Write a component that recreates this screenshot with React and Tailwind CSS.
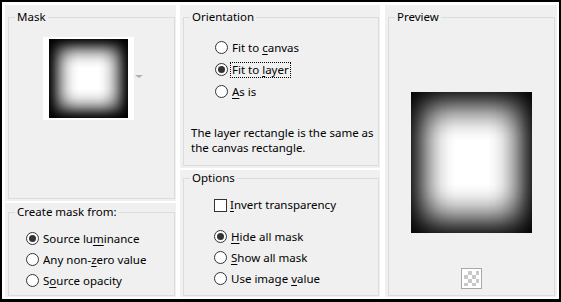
import React from 'react';

function Radio({ checked }) {
  return (
    <span className="w-[13px] h-[13px] shrink-0 rounded-full border border-[#333] bg-white flex items-center justify-center">
      {checked && <span className="w-[7px] h-[7px] rounded-full bg-[#333]" />}
    </span>
  );
}

function Option({ checked, focus, children }) {
  return (
    <div className="flex items-center h-[21px]">
      <Radio checked={checked} />
      <span
        className={
          'ml-[2px] px-[1px] leading-[14px] border border-dotted whitespace-nowrap ' +
          (focus ? 'border-black' : 'border-transparent')
        }
      >
        {children}
      </span>
    </div>
  );
}

function Key({ children }) {
  return <u className="underline underline-offset-2 decoration-1">{children}</u>;
}

function Legend({ children }) {
  return <legend className="ml-[6px] px-[2px] leading-[16px]">{children}</legend>;
}

// soft square fade: two edge gradients stacked on white
const fadeThumb =
  'bg-white bg-[image:linear-gradient(to_right,rgba(0,0,0,.95)_0%,rgba(0,0,0,.8)_5%,rgba(0,0,0,.6)_10%,rgba(0,0,0,.4)_15%,rgba(0,0,0,.24)_20%,rgba(0,0,0,.12)_25%,rgba(0,0,0,.04)_31%,transparent_37%,transparent_63%,rgba(0,0,0,.04)_69%,rgba(0,0,0,.12)_75%,rgba(0,0,0,.24)_80%,rgba(0,0,0,.4)_85%,rgba(0,0,0,.6)_90%,rgba(0,0,0,.8)_95%,rgba(0,0,0,.95)_100%),linear-gradient(to_bottom,rgba(0,0,0,.95)_0%,rgba(0,0,0,.8)_5%,rgba(0,0,0,.6)_10%,rgba(0,0,0,.4)_15%,rgba(0,0,0,.24)_20%,rgba(0,0,0,.12)_25%,rgba(0,0,0,.04)_31%,transparent_37%,transparent_63%,rgba(0,0,0,.04)_69%,rgba(0,0,0,.12)_75%,rgba(0,0,0,.24)_80%,rgba(0,0,0,.4)_85%,rgba(0,0,0,.6)_90%,rgba(0,0,0,.8)_95%,rgba(0,0,0,.95)_100%)]';

const fadePreview =
  'bg-white bg-[image:linear-gradient(to_right,rgba(0,0,0,.85)_0%,rgba(0,0,0,.7)_5%,rgba(0,0,0,.52)_10%,rgba(0,0,0,.35)_15%,rgba(0,0,0,.21)_20%,rgba(0,0,0,.1)_25%,rgba(0,0,0,.03)_31%,transparent_37%,transparent_63%,rgba(0,0,0,.03)_69%,rgba(0,0,0,.1)_75%,rgba(0,0,0,.21)_80%,rgba(0,0,0,.35)_85%,rgba(0,0,0,.52)_90%,rgba(0,0,0,.7)_95%,rgba(0,0,0,.85)_100%),linear-gradient(to_bottom,rgba(0,0,0,.85)_0%,rgba(0,0,0,.7)_5%,rgba(0,0,0,.52)_10%,rgba(0,0,0,.35)_15%,rgba(0,0,0,.21)_20%,rgba(0,0,0,.1)_25%,rgba(0,0,0,.03)_30%,transparent_35%,transparent_65%,rgba(0,0,0,.03)_70%,rgba(0,0,0,.1)_75%,rgba(0,0,0,.21)_80%,rgba(0,0,0,.35)_85%,rgba(0,0,0,.52)_90%,rgba(0,0,0,.7)_95%,rgba(0,0,0,.85)_100%)]';

export default function App() {
  return (
    <div
      className="w-[561px] h-[302px] bg-black p-[2px] pb-[3px] text-[11.5px] text-black"
      style={{ fontFamily: '"Noto Sans", "Open Sans", sans-serif' }}
    >
      <div className="w-full h-full bg-white flex gap-[4px] pl-[3px] pt-[3px] pb-[2px]">
        {/* left column */}
        <div className="w-[171px] flex flex-col gap-[2px]">
          <div className="h-[196px] bg-[#f0f0f0] pl-[3px] pt-[4px]">
            <fieldset className="w-[167px] h-[190px] border border-[#dcdcdc]">
              <Legend>Mask</Legend>
              <div className="flex items-center ml-[34px] mt-[12px]">
                <div className="w-[91px] h-[83px] bg-white pl-[6px] pt-[2px]">
                  <div className={'w-[79px] h-[79px] ' + fadeThumb} />
                </div>
                <span className="ml-[1px] mt-[-4px] w-0 h-0 border-l-[4px] border-r-[4px] border-t-[3px] border-l-transparent border-r-transparent border-t-[#b0b0b0]" />
              </div>
            </fieldset>
          </div>
          <div className="flex-1 bg-[#f0f0f0] pl-[3px] pt-[1px]">
            <fieldset className="w-[167px] h-[92px] border border-[#dcdcdc]">
              <Legend>Create mask from:</Legend>
              <div className="ml-[17px] mt-[8px]">
                <Option checked>Source lu<Key>m</Key>inance</Option>
                <Option>Any non-<Key>z</Key>ero value</Option>
                <Option>S<Key>o</Key>urce opacity</Option>
              </div>
            </fieldset>
          </div>
        </div>

        {/* middle column */}
        <div className="w-[200px] flex flex-col gap-[2px]">
          <div className="h-[163px] bg-[#f0f0f0] pl-[3px] pt-[4px]">
            <fieldset className="w-[196px] h-[157px] border border-[#dcdcdc]">
              <Legend>Orientation</Legend>
              <div className="ml-[31px] mt-[12px] flex flex-col gap-[1px]">
                <Option>Fit to <Key>c</Key>anvas</Option>
                <Option checked focus>Fit to <Key>l</Key>ayer</Option>
                <Option><Key>A</Key>s is</Option>
              </div>
              <p className="ml-[7px] mt-[23px] leading-[15px] whitespace-nowrap">
                The layer rectangle is the same as
                <br />
                the canvas rectangle.
              </p>
            </fieldset>
          </div>
          <div className="flex-1 bg-[#f0f0f0] pl-[3px]">
            <fieldset className="w-[196px] h-[126px] border border-[#dcdcdc]">
              <Legend>Options</Legend>
              <div className="ml-[30px] mt-[9px]">
                <div className="flex items-center h-[20px]">
                  <span className="w-[13px] h-[13px] shrink-0 border border-[#333] bg-white" />
                  <span className="ml-[3px]"><Key>I</Key>nvert transparency</span>
                </div>
                <div className="mt-[11px]">
                  <Option checked><Key>H</Key>ide all mask</Option>
                  <Option><Key>S</Key>how all mask</Option>
                  <Option>Use image <Key>v</Key>alue</Option>
                </div>
              </div>
            </fieldset>
          </div>
        </div>

        {/* right column */}
        <div className="w-[172px] ml-[1px] bg-[#f0f0f0] pl-[3px] pt-[4px]">
          <fieldset className="w-[167px] h-[287px] border border-[#dcdcdc]">
            <Legend>Preview</Legend>
            <div className={'ml-[22px] mt-[67px] w-[121px] h-[141px] ' + fadePreview} />
            <div className="ml-[72px] mt-[35px] w-[21px] h-[21px] border border-[#a8a8a8] p-[2px] bg-white">
              <div className="w-full h-full bg-[image:conic-gradient(#c8c8c8_25%,#fff_0_50%,#c8c8c8_0_75%,#fff_0)] bg-size-[8px_8px]" />
            </div>
          </fieldset>
        </div>
      </div>
    </div>
  );
}
